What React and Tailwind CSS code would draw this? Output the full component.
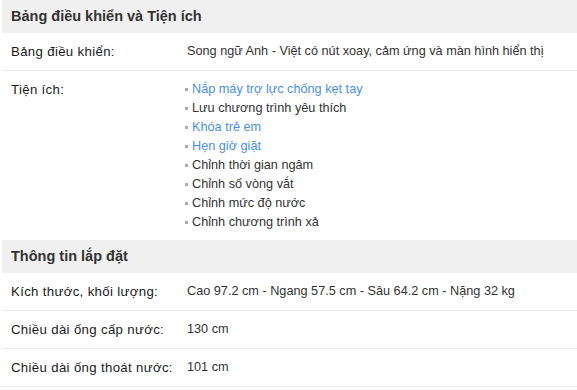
const FEATURES = [
  { text: 'Nắp máy trợ lực chống kẹt tay', link: true },
  { text: 'Lưu chương trình yêu thích' },
  { text: 'Khóa trẻ em', link: true },
  { text: 'Hẹn giờ giặt', link: true },
  { text: 'Chỉnh thời gian ngâm' },
  { text: 'Chỉnh số vòng vắt' },
  { text: 'Chỉnh mức độ nước' },
  { text: 'Chỉnh chương trình xả' },
];

const INSTALL = [
  ['Kích thước, khối lượng:', 'Cao 97.2 cm - Ngang 57.5 cm - Sâu 64.2 cm - Nặng 32 kg'],
  ['Chiều dài ống cấp nước:', '130 cm'],
  ['Chiều dài ống thoát nước:', '101 cm'],
];

const SectionHead = ({ children }) => (
  <div className="flex h-[33px] items-center bg-[#f0f0f0] pl-[9px] text-[14.5px] font-bold text-[#333]">
    {children}
  </div>
);

const Row = ({ label, children, className = '' }) => (
  <div className={`flex border-b border-[#eaeaea] ${className}`}>
    <div className="w-[176px] shrink-0 pl-[9px] text-[13.2px] tracking-[0.35px] text-[#1a1a1a]">{label}</div>
    <div className="flex-1 pl-[9px]">{children}</div>
  </div>
);

export default function App() {
  return (
    <div className="h-[390px] w-[577px] overflow-hidden bg-white">
      <div className="ml-[2px] text-[12.7px] leading-[19px] text-[#333]" style={{ fontFamily: '"Liberation Sans", Arial, sans-serif' }}>
        <SectionHead>Bảng điều khiển và Tiện ích</SectionHead>
        <Row label="Bảng điều khiển:" className="h-[38px] items-center">
          Song ngữ Anh - Việt có nút xoay, cảm ứng và màn hình hiển thị
        </Row>
        <div className="flex h-[169px] pt-[9px]">
          <div className="w-[176px] shrink-0 pl-[9px] text-[13.2px] tracking-[0.35px] text-[#1a1a1a]">Tiện ích:</div>
          <ul className="flex-1 pl-[7px]">
            {FEATURES.map(f => (
              <li key={f.text} className="flex items-center">
                <span className="mr-[4px] inline-block h-[3px] w-[3px] bg-[#aaa]" />
                <span className={f.link ? 'text-[#4a90e2]' : ''}>{f.text}</span>
              </li>
            ))}
          </ul>
        </div>
        <SectionHead>Thông tin lắp đặt</SectionHead>
        {INSTALL.map(([label, value]) => (
          <Row key={label} label={label} className="h-[38px] items-center">{value}</Row>
        ))}
      </div>
    </div>
  );
}
